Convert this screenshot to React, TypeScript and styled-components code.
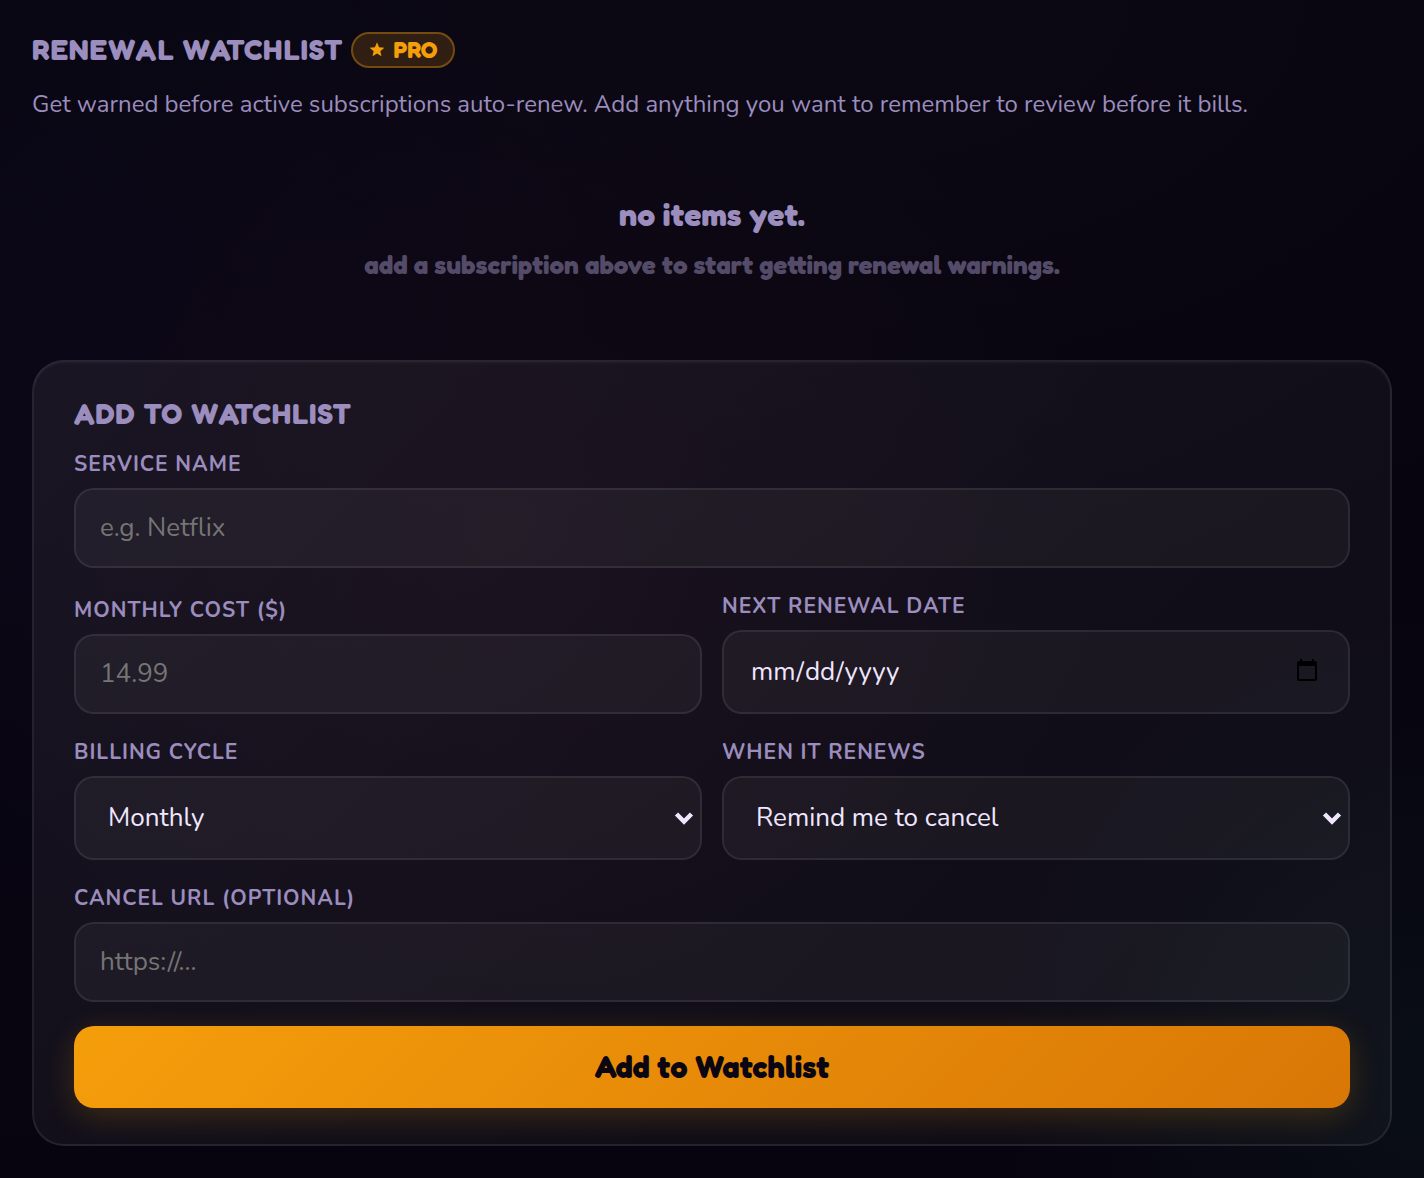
import React, { useId } from "react";
import styled, { createGlobalStyle, css } from "styled-components";

const color = {
  base: "#07040f",
  text: "#f0e6ff",
  muted: "#9b8dbd",
  faint: "#544b68",
  amber: "#f59e0b",
  amberDeep: "#d97706",
  line: "rgba(255, 255, 255, 0.08)",
};

const body = `Nunito, Lato, "Open Sans", sans-serif`;
const display = `"Fredoka One", Fredoka, "Baloo 2", Lato, "Open Sans", sans-serif`;

const GlobalStyle = createGlobalStyle`
  *, *::before, *::after { box-sizing: border-box; }
  body {
    margin: 0;
    min-height: 100vh;
    color: ${color.text};
    font-family: ${body};
    background:
      radial-gradient(ellipse 42% 46% at 36% 46%, rgba(110, 35, 60, 0.08), transparent),
      radial-gradient(ellipse 30% 40% at 100% 92%, rgba(30, 100, 80, 0.1), transparent),
      radial-gradient(ellipse 70% 50% at 60% 0%, rgba(60, 60, 80, 0.08), transparent),
      radial-gradient(ellipse 50% 70% at 0% 30%, rgba(50, 40, 110, 0.08), transparent),
      ${color.base};
  }
`;

const Page = styled.main`
  padding: 32px;
`;

const displayText = css`
  margin: 0;
  font-family: ${display};
  font-weight: 700;
`;

const TitleRow = styled.header`
  display: flex;
  align-items: center;
  gap: 8px;
`;

const SectionTitle = styled.h2`
  ${displayText}
  color: ${color.muted};
  font-size: 29px;
  line-height: 32px;
  letter-spacing: 1px;
  text-transform: uppercase;
`;

const Badge = styled.span`
  ${displayText}
  display: inline-flex;
  align-items: center;
  gap: 8px;
  height: 36px;
  padding: 0 16px;
  border: 2px solid rgba(245, 158, 11, 0.35);
  border-radius: 18px;
  background: rgba(245, 158, 11, 0.16);
  color: ${color.amber};
  font-size: 23px;
  line-height: 32px;
`;

const Intro = styled.p`
  margin: 18px 0 0;
  color: ${color.muted};
  font-size: 24px;
  line-height: 36px;
`;

const Empty = styled.section`
  padding: 73px 0 79px;
  text-align: center;
`;

const EmptyTitle = styled.p`
  ${displayText}
  color: ${color.muted};
  font-size: 32px;
  line-height: 40px;
`;

const EmptyHint = styled.p`
  ${displayText}
  margin-top: 14px;
  color: ${color.faint};
  font-size: 26px;
  line-height: 32px;
`;

const Card = styled.form`
  display: grid;
  gap: 24px;
  padding: 36px 40px;
  border: 2px solid ${color.line};
  border-radius: 32px;
  background: linear-gradient(135deg, rgba(255, 255, 255, 0.06), rgba(255, 255, 255, 0.03));
  box-shadow: inset 0 2px 2px rgba(255, 255, 255, 0.03);
`;

const CardTitle = styled(SectionTitle)`
  margin-bottom: -4px;
`;

const Columns = styled.div`
  display: grid;
  grid-template-columns: 1fr 1fr;
  align-items: end;
  gap: 24px 20px;
`;

const FieldBox = styled.div`
  display: grid;
  gap: 10px;
`;

const Label = styled.label`
  color: ${color.muted};
  font-size: 21px;
  font-weight: 700;
  line-height: 28px;
  letter-spacing: 1px;
  text-transform: uppercase;
`;

const control = css`
  display: block;
  width: 100%;
  margin: 0;
  border: 2px solid ${color.line};
  border-radius: 20px;
  background: rgba(255, 255, 255, 0.045);
  color: ${color.text};
  font-family: ${body};
  font-size: 26px;
  outline: none;
`;

const Input = styled.input<{ $tall?: boolean }>`
  ${control}
  height: ${(p) => (p.$tall ? 84 : 80)}px;
  padding: 0 ${(p) => (p.$tall ? 26 : 24)}px 2px;
  &::placeholder {
    color: #757575;
    opacity: 1;
  }
`;

const SelectWrap = styled.div`
  display: grid;
  align-items: center;
  > * {
    grid-area: 1 / 1;
  }
`;

const Select = styled.select`
  ${control}
  height: 84px;
  padding: 0 32px 2px;
  appearance: none;
  option {
    color: #111;
  }
`;

const Chevron = styled.svg`
  justify-self: end;
  margin-right: 8px;
  pointer-events: none;
`;

const Submit = styled.button`
  ${displayText}
  height: 82px;
  padding: 0 24px 2px;
  border: 0;
  border-radius: 20px;
  background: linear-gradient(135deg, ${color.amber}, ${color.amberDeep});
  box-shadow: 0 8px 32px rgba(245, 158, 11, 0.2);
  color: #0a0612;
  font-size: 31px;
  cursor: pointer;
`;

type FieldProps = React.InputHTMLAttributes<HTMLInputElement> & { label: string; $tall?: boolean };

function Field({ label, ...rest }: FieldProps) {
  const id = useId();
  return (
    <FieldBox>
      <Label htmlFor={id}>{label}</Label>
      <Input id={id} {...rest} />
    </FieldBox>
  );
}

function SelectField({ label, options }: { label: string; options: string[] }) {
  const id = useId();
  return (
    <FieldBox>
      <Label htmlFor={id}>{label}</Label>
      <SelectWrap>
        <Select id={id}>
          {options.map((o) => (
            <option key={o}>{o}</option>
          ))}
        </Select>
        <Chevron width="20" height="14" viewBox="0 0 20 14" aria-hidden="true">
          <path d="M2.500 3 10 10.500 17.500 3" fill="none" stroke={color.text} strokeWidth="4.500" />
        </Chevron>
      </SelectWrap>
    </FieldBox>
  );
}

export default function App() {
  return (
    <Page>
      <GlobalStyle />
      <TitleRow>
        <SectionTitle>Renewal Watchlist</SectionTitle>
        <Badge>
          <svg width="16" height="16" viewBox="0 0 24 24" fill="currentColor" aria-hidden="true">
            <path d="M12 0.500l3.100 7.400 7.900.6-6 5.200 1.800 7.800L12 17.400l-6.800 4.100L7 13.700l-6-5.200 7.900-.6z" />
          </svg>
          PRO
        </Badge>
      </TitleRow>
      <Intro>
        Get warned before active subscriptions auto-renew. Add anything you want to remember to review before it bills.
      </Intro>
      <Empty>
        <EmptyTitle>no items yet.</EmptyTitle>
        <EmptyHint>add a subscription above to start getting renewal warnings.</EmptyHint>
      </Empty>
      <Card onSubmit={(e) => e.preventDefault()}>
        <CardTitle as="h3">Add to Watchlist</CardTitle>
        <Field label="Service name" type="text" placeholder="e.g. Netflix" />
        <Columns>
          <Field label="Monthly cost ($)" type="number" step="0.01" placeholder="14.99" />
          <Field label="Next renewal date" type="date" $tall />
          <SelectField label="Billing cycle" options={["Monthly", "Yearly", "Weekly"]} />
          <SelectField label="When it renews" options={["Remind me to cancel", "Remind me to review"]} />
        </Columns>
        <Field label="Cancel URL (optional)" type="url" placeholder="https://..." />
        <Submit type="submit">Add to Watchlist</Submit>
      </Card>
    </Page>
  );
}
